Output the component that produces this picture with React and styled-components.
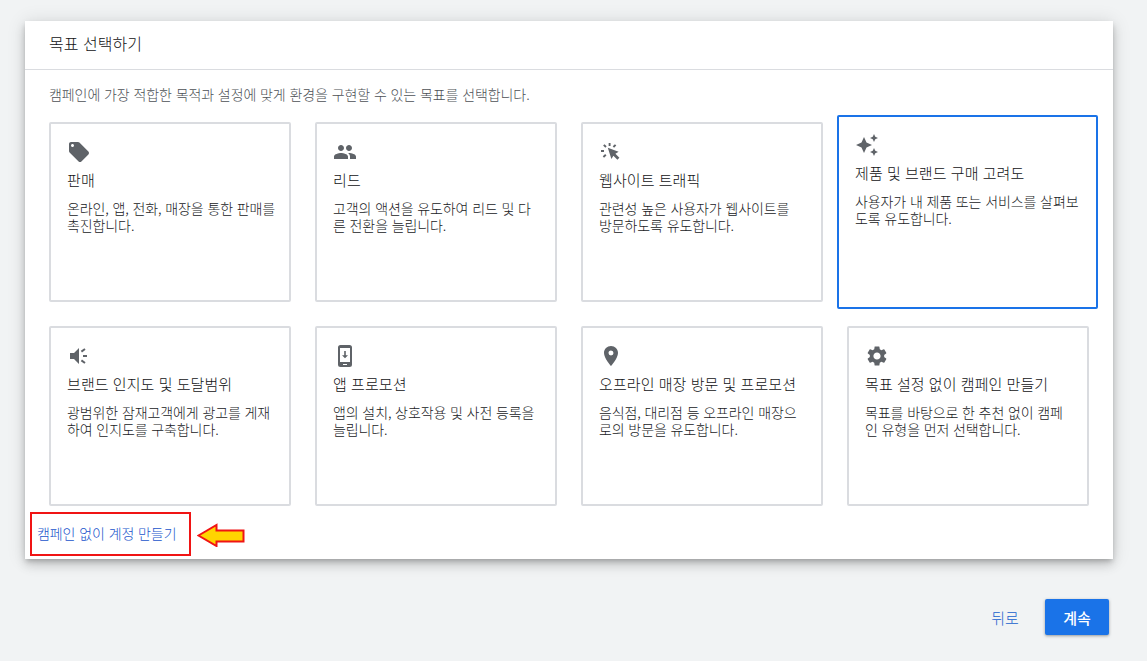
import { useState } from "react";
import styled, { createGlobalStyle } from "styled-components";
import {
  MdLocalOffer,
  MdPeople,
  MdAutoAwesome,
  MdPlace,
  MdSettings,
} from "react-icons/md";

const GlobalStyle = createGlobalStyle`
  * {
    box-sizing: border-box;
  }

  body {
    margin: 0;
    background: #f1f3f4;
    font-family: "Noto Sans CJK KR", "Noto Sans", sans-serif;
    font-weight: 300;
  }
`;

const Page = styled.div`
  height: 661px;
  padding: 21px 34px 0 25px;
  overflow: hidden;
`;

const Panel = styled.section`
  height: 538px;
  background: white;
  box-shadow: 0 3px 5px -1px rgba(0, 0, 0, 0.2),
    0 6px 10px 0 rgba(0, 0, 0, 0.14), 0 1px 18px 0 rgba(0, 0, 0, 0.12);
`;

const PanelHeader = styled.header`
  display: flex;
  align-items: center;
  height: 49px;
  padding: 0 24px 4px;
  border-bottom: 1px solid #dadce0;
`;

const PanelTitle = styled.h1`
  margin: 0;
  font-size: 16px;
  font-weight: inherit;
  word-spacing: 1px;
  color: #111214;
`;

const Intro = styled.p`
  margin: 0;
  padding: 14px 24px 0;
  height: 52px;
  font-size: 14px;
  line-height: 20px;
  letter-spacing: -0.08px;
  word-spacing: 0.8px;
  color: #4d5156;
`;

const Grid = styled.div`
  display: grid;
  grid-template-columns: repeat(4, 242px);
  grid-auto-rows: 180px;
  gap: 24px;
  padding: 0 24px;
`;

const GoalCard = styled.article`
  margin: ${({ $selected }) => ($selected ? "-7px -9px -7px -10px" : "0")};
  padding: 16px 10px 0 16px;
  background: white;
  border: 2px solid ${({ $selected }) => ($selected ? "#1a73e8" : "#dadce0")};
  border-radius: 2px;
  cursor: pointer;

  svg {
    display: block;
    color: #5f6368;
  }
`;

const GoalTitle = styled.h2`
  margin: 6px 0 0;
  font-size: 15px;
  font-weight: inherit;
  line-height: 20px;
  letter-spacing: 0.1px;
  word-spacing: 0.7px;
  white-space: nowrap;
  color: #111214;
`;

const GoalText = styled.p`
  margin: 10px 0 0;
  font-size: 14px;
  line-height: 17px;
  letter-spacing: -0.1px;
  word-spacing: 0.8px;
  white-space: pre;
  color: #202124;
`;

const SkipRow = styled.div`
  display: flex;
  align-items: center;
  gap: 6px;
  margin: 6px 0 0 5px;
`;

const SkipLink = styled.a`
  display: flex;
  align-items: center;
  width: 161px;
  height: 44px;
  padding: 0 0 2px 5px;
  border: 2px solid #f01414;
  font-size: 14px;
  letter-spacing: -0.08px;
  word-spacing: 0.8px;
  white-space: nowrap;
  color: #2255cc;
  cursor: pointer;
`;

const Actions = styled.footer`
  display: flex;
  justify-content: flex-end;
  gap: 8px;
  margin: 40px 4px 0 0;
`;

const Button = styled.button`
  width: 64px;
  height: 36px;
  padding: 0;
  border: none;
  border-radius: 2px;
  font-family: inherit;
  font-size: 15px;
  font-weight: ${({ $primary }) => ($primary ? 500 : 300)};
  color: ${({ $primary }) => ($primary ? "white" : "#1560cc")};
  background: ${({ $primary }) => ($primary ? "#1a73e8" : "transparent")};
  box-shadow: ${({ $primary }) =>
    $primary ? "0 1px 3px rgba(60, 64, 67, 0.5)" : "none"};
  cursor: pointer;
`;

const ClickIcon = () => (
  <svg width="24" height="24" viewBox="0 0 24 24" fill="currentColor">
    <path d="M8.8 7.8 19.6 11.8 16.4 13.8 20.4 17.8 18.4 19.8 14.4 15.8 12.4 19z" />
    <path
      d="M10.6 3v3M4.8 4.8 7 7M16.6 4.8 14.4 7M2 11h3M4.4 17l2.4-2.2"
      fill="none"
      stroke="currentColor"
      strokeWidth="1.9"
    />
  </svg>
);

const SpeakerIcon = () => (
  <svg width="24" height="24" viewBox="0 0 24 24" fill="currentColor">
    <path d="M3 9v6h4l5 5V4L7 9z" />
    <path
      d="M14.4 7.6 18 5M16 12h4M14.4 16.4 18 19"
      fill="none"
      stroke="currentColor"
      strokeWidth="2"
    />
  </svg>
);

const PhoneIcon = () => (
  <svg width="24" height="24" viewBox="0 0 24 24" fill="currentColor">
    <path
      fillRule="evenodd"
      d="M7.5 1h9A2.5 2.5 0 0 1 19 3.5v17a2.5 2.5 0 0 1-2.5 2.5h-9A2.5 2.5 0 0 1 5 20.5v-17A2.5 2.5 0 0 1 7.5 1zM7 4v14h10V4zm3 16v1h4v-1z"
    />
    <path d="M11.2 7h1.6v4.3H15l-3 3-3-3h2.2z" />
  </svg>
);

const goals = [
  {
    icon: <MdLocalOffer size={24} />,
    title: "판매",
    text: "온라인, 앱, 전화, 매장을 통한 판매를\n촉진합니다.",
  },
  {
    icon: <MdPeople size={24} />,
    title: "리드",
    text: "고객의 액션을 유도하여 리드 및 다\n른 전환을 늘립니다.",
  },
  {
    icon: <ClickIcon />,
    title: "웹사이트 트래픽",
    text: "관련성 높은 사용자가 웹사이트를\n방문하도록 유도합니다.",
  },
  {
    icon: <MdAutoAwesome size={24} />,
    title: "제품 및 브랜드 구매 고려도",
    text: "사용자가 내 제품 또는 서비스를 살펴보\n도록 유도합니다.",
  },
  {
    icon: <SpeakerIcon />,
    title: "브랜드 인지도 및 도달범위",
    text: "광범위한 잠재고객에게 광고를 게재\n하여 인지도를 구축합니다.",
  },
  {
    icon: <PhoneIcon />,
    title: "앱 프로모션",
    text: "앱의 설치, 상호작용 및 사전 등록을\n늘립니다.",
  },
  {
    icon: <MdPlace size={24} />,
    title: "오프라인 매장 방문 및 프로모션",
    text: "음식점, 대리점 등 오프라인 매장으\n로의 방문을 유도합니다.",
  },
  {
    icon: <MdSettings size={24} />,
    title: "목표 설정 없이 캠페인 만들기",
    text: "목표를 바탕으로 한 추천 없이 캠페\n인 유형을 먼저 선택합니다.",
  },
];

const App = () => {
  const [selected, setSelected] = useState(3);

  return (
    <Page>
      <GlobalStyle />
      <Panel>
        <PanelHeader>
          <PanelTitle>목표 선택하기</PanelTitle>
        </PanelHeader>
        <Intro>
          캠페인에 가장 적합한 목적과 설정에 맞게 환경을 구현할 수 있는 목표를
          선택합니다.
        </Intro>
        <Grid>
          {goals.map((goal, index) => (
            <GoalCard
              key={index}
              $selected={index === selected}
              onClick={() => setSelected(index)}
            >
              {goal.icon}
              <GoalTitle>{goal.title}</GoalTitle>
              <GoalText>{goal.text}</GoalText>
            </GoalCard>
          ))}
        </Grid>
        <SkipRow>
          <SkipLink>캠페인 없이 계정 만들기</SkipLink>
          <svg width="48" height="26" viewBox="0 0 48 26">
            <path
              d="M1.5 14.5 19.5 4v5.500h27v11h-27V25z"
              fill="#ffd400"
              stroke="#f01414"
              strokeWidth="2"
            />
          </svg>
        </SkipRow>
      </Panel>
      <Actions>
        <Button>뒤로</Button>
        <Button $primary>계속</Button>
      </Actions>
    </Page>
  );
};

export default App;
